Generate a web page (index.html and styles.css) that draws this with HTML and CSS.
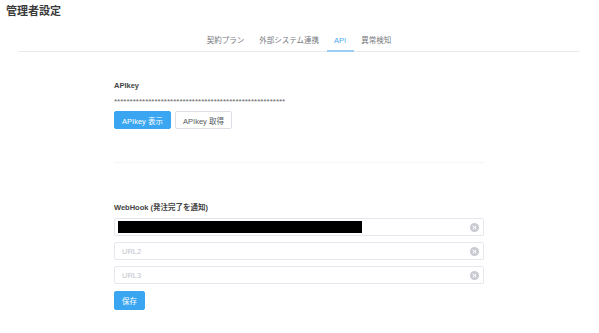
FILE: index.html
```html
<!DOCTYPE html>
<html lang="ja">
<head>
    <meta charset="UTF-8">
    <title>管理者設定</title>
    <link rel="stylesheet" href="styles.css">
</head>
<body>
    <div class="page-title">管理者設定</div>

    <div class="tabs">
        <a class="tab">契約プラン</a>
        <a class="tab">外部システム連携</a>
        <a class="tab active">API</a>
        <a class="tab">異常検知</a>
    </div>

    <div class="panel">
        <div class="label">APIkey</div>
        <div class="masked">*******************************************************</div>
        <div class="btn-row">
            <button class="btn primary">APIkey 表示</button>
            <button class="btn">APIkey 取得</button>
        </div>

        <div class="divider"></div>

        <div class="label">WebHook (発注完了を通知)</div>
        <div class="inputs">
            <div class="input">
                <span class="redacted"></span>
                <span class="clear"></span>
            </div>
            <div class="input">
                <span class="placeholder">URL2</span>
                <span class="clear"></span>
            </div>
            <div class="input">
                <span class="placeholder">URL3</span>
                <span class="clear"></span>
            </div>
        </div>
        <button class="btn primary save">保存</button>
    </div>
</body>
</html>
```

FILE: styles.css
```css
body {
    margin: 0;
    font-family: 'Liberation Sans', 'Noto Sans CJK JP', sans-serif;
    color: #303133;
    background-color: #ffffff;
}

.page-title {
    padding: 4px 6px 0;
    font-size: 11px;
    line-height: 15px;
    font-weight: 700;
    color: #3a3a3a;
}

.tabs {
    display: flex;
    justify-content: center;
    margin: 12px 19px 0 18px;
    border-bottom: 1px solid #e8eaee;
}

.tab {
    position: relative;
    padding: 0 7.5px;
    font-size: 7.5px;
    line-height: 20px;
    color: #777a80;
}

.tab.active {
    color: #4aa8f5;
}

.tab.active::after {
    content: "";
    position: absolute;
    left: 0;
    right: 0;
    bottom: -1px;
    height: 2px;
    background-color: #9ccdf5;
}

.panel {
    width: 371px;
    margin: 28px 0 0 114px;
}

.label {
    font-size: 7.5px;
    line-height: 12px;
    font-weight: 700;
    color: #444444;
}

.masked {
    margin-top: 4px;
    font-size: 8px;
    line-height: 12px;
    color: #666666;
    overflow: hidden;
    white-space: nowrap;
    width: 173px;
}

.btn-row {
    display: flex;
    gap: 4px;
    margin-top: 3px;
}

.btn {
    height: 18px;
    padding: 0 9px;
    font-family: inherit;
    font-size: 7.5px;
    color: #555a60;
    background-color: #ffffff;
    border: 1px solid #dcdfe6;
    border-radius: 2px;
}

.btn.primary {
    color: #ffffff;
    background-color: #3aa6f2;
    border-color: #3aa6f2;
}

.btn-row .btn {
    width: 57px;
    padding: 0;
}

.divider {
    margin-top: 33px;
    height: 1px;
    background-color: #f6f6f6;
    box-shadow: 0 1px 3px rgba(0, 0, 0, 0.02);
}

.divider + .label {
    margin-top: 39px;
}

.inputs {
    display: flex;
    flex-direction: column;
    gap: 6px;
    margin-top: 4px;
    width: 370px;
}

.input {
    display: flex;
    align-items: center;
    justify-content: space-between;
    height: 16px;
    padding: 0 4px 0 3px;
    border: 1px solid #e4e7ed;
    border-radius: 2px;
}

.placeholder {
    padding-left: 4px;
    font-size: 7.5px;
    color: #c0c4cc;
}

.redacted {
    width: 244px;
    height: 12px;
    background-color: #000000;
}

.clear {
    position: relative;
    width: 9px;
    height: 9px;
    border-radius: 50%;
    background-color: #c8cbd1;
}

.clear::before,
.clear::after {
    content: "";
    position: absolute;
    left: 4px;
    top: 2px;
    width: 1px;
    height: 5px;
    background-color: #ffffff;
    transform: rotate(45deg);
}

.clear::after {
    transform: rotate(-45deg);
}

.save {
    display: block;
    margin-top: 7px;
    width: 31px;
    height: 19px;
    padding: 0;
}
```
